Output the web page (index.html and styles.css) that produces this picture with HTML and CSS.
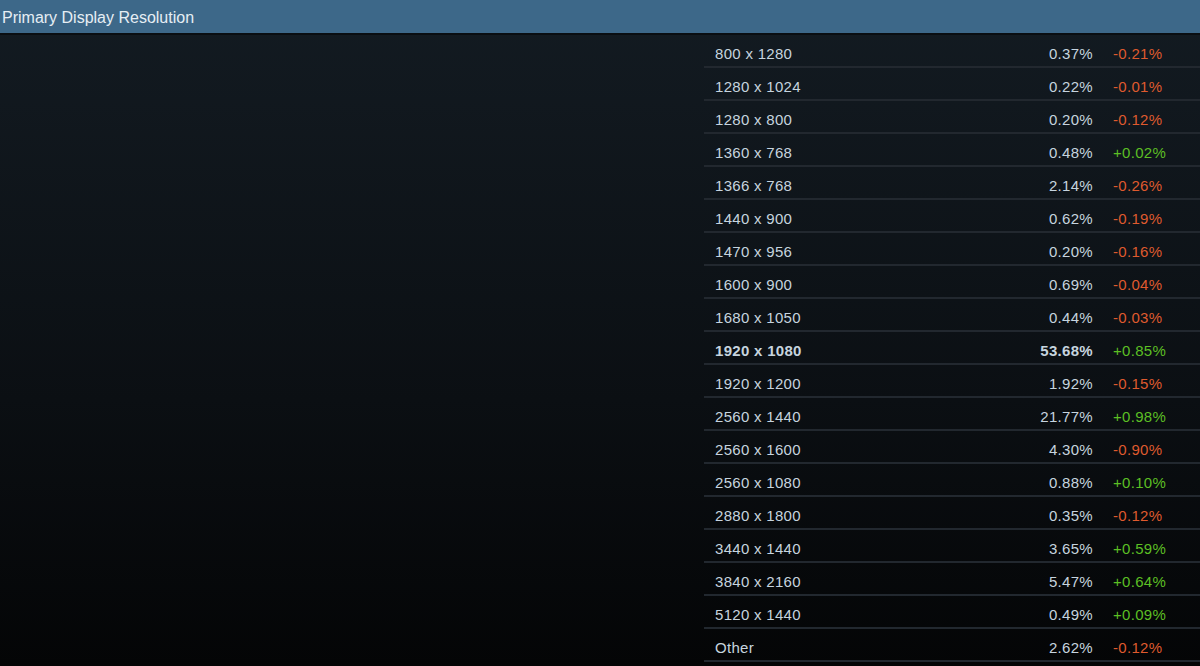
FILE: index.html
```html
<!DOCTYPE html>
<html lang="en">
<head>
    <meta charset="UTF-8">
    <title>Primary Display Resolution</title>
    <link rel="stylesheet" href="styles.css">
</head>
<body>
    <div class="header">Primary Display Resolution</div>
    <div class="content">
        <div class="spacer"></div>
        <div class="stats">
            <div class="row"><span class="name">800 x 1280</span><span class="pct">0.37%</span><span class="chg down">-0.21%</span></div>
            <div class="row"><span class="name">1280 x 1024</span><span class="pct">0.22%</span><span class="chg down">-0.01%</span></div>
            <div class="row"><span class="name">1280 x 800</span><span class="pct">0.20%</span><span class="chg down">-0.12%</span></div>
            <div class="row"><span class="name">1360 x 768</span><span class="pct">0.48%</span><span class="chg up">+0.02%</span></div>
            <div class="row"><span class="name">1366 x 768</span><span class="pct">2.14%</span><span class="chg down">-0.26%</span></div>
            <div class="row"><span class="name">1440 x 900</span><span class="pct">0.62%</span><span class="chg down">-0.19%</span></div>
            <div class="row"><span class="name">1470 x 956</span><span class="pct">0.20%</span><span class="chg down">-0.16%</span></div>
            <div class="row"><span class="name">1600 x 900</span><span class="pct">0.69%</span><span class="chg down">-0.04%</span></div>
            <div class="row"><span class="name">1680 x 1050</span><span class="pct">0.44%</span><span class="chg down">-0.03%</span></div>
            <div class="row top"><span class="name">1920 x 1080</span><span class="pct">53.68%</span><span class="chg up">+0.85%</span></div>
            <div class="row"><span class="name">1920 x 1200</span><span class="pct">1.92%</span><span class="chg down">-0.15%</span></div>
            <div class="row"><span class="name">2560 x 1440</span><span class="pct">21.77%</span><span class="chg up">+0.98%</span></div>
            <div class="row"><span class="name">2560 x 1600</span><span class="pct">4.30%</span><span class="chg down">-0.90%</span></div>
            <div class="row"><span class="name">2560 x 1080</span><span class="pct">0.88%</span><span class="chg up">+0.10%</span></div>
            <div class="row"><span class="name">2880 x 1800</span><span class="pct">0.35%</span><span class="chg down">-0.12%</span></div>
            <div class="row"><span class="name">3440 x 1440</span><span class="pct">3.65%</span><span class="chg up">+0.59%</span></div>
            <div class="row"><span class="name">3840 x 2160</span><span class="pct">5.47%</span><span class="chg up">+0.64%</span></div>
            <div class="row"><span class="name">5120 x 1440</span><span class="pct">0.49%</span><span class="chg up">+0.09%</span></div>
            <div class="row"><span class="name">Other</span><span class="pct">2.62%</span><span class="chg down">-0.12%</span></div>
        </div>
    </div>
</body>
</html>
```
FILE: styles.css
```css
html, body {
    margin: 0;
    height: 100%;
}
body {
    font-family: 'Liberation Sans', Arial, sans-serif;
    background: linear-gradient(to bottom, #131b22 0%, #0b0f13 60%, #040506 100%);
    color: #c6d4df;
    overflow: hidden;
}
.header {
    height: 33px;
    line-height: 35px;
    padding-left: 2px;
    font-size: 16px;
    color: #e6eef4;
    background-color: #3d6889;
    border-bottom: 2px solid #0a0e12;
}
.content {
    display: flex;
}
.spacer {
    width: 704px;
}
.stats {
    flex: 1;
}
.row {
    display: grid;
    grid-template-columns: 1fr auto 107px;
    align-items: center;
    height: 25px;
    padding: 6px 0 0 11px;
    font-size: 15px;
    letter-spacing: 0.3px;
    border-bottom: 2px solid #22282f;
}
.pct {
    text-align: right;
}
.chg {
    padding-left: 20px;
}
.up {
    color: #5cbf24;
}
.down {
    color: #df5a2e;
}
.top {
    font-weight: bold;
}
.top .chg {
    font-weight: normal;
}
```
